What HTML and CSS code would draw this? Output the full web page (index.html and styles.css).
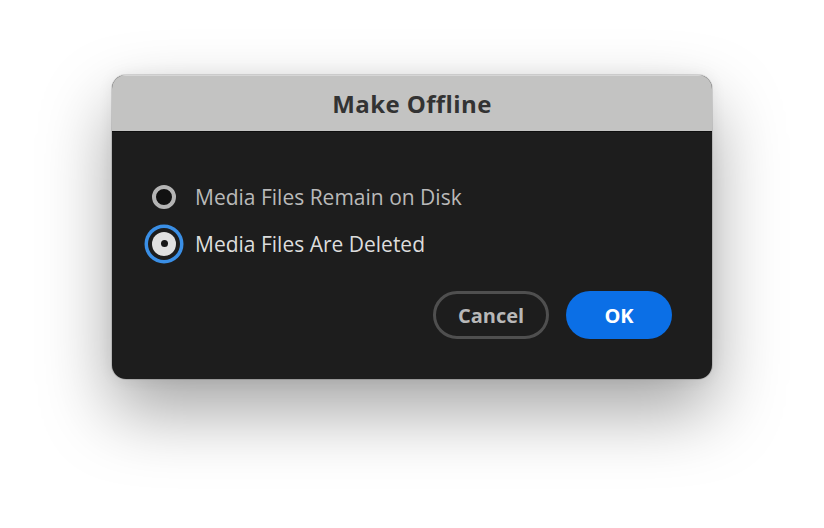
FILE: index.html
```html
<!DOCTYPE html>
<html lang="en">
<head>
<meta charset="utf-8">
<title>Make Offline</title>
<link rel="stylesheet" href="styles.css">
</head>
<body>
<div class="stage">
  <div class="dialog">
    <div class="titlebar">Make Offline</div>
    <div class="body">
      <div class="options">
        <label class="option">
          <span class="radio"></span>
          <span class="label">Media Files Remain on Disk</span>
        </label>
        <label class="option selected">
          <span class="radio checked"></span>
          <span class="label">Media Files Are Deleted</span>
        </label>
      </div>
      <div class="buttons">
        <button class="btn cancel">Cancel</button>
        <button class="btn ok">OK</button>
      </div>
    </div>
  </div>
</div>
</body>
</html>
```
FILE: styles.css
```css
html, body {
  margin: 0;
  padding: 0;
  background: #ffffff;
  width: 824px;
  height: 528px;
  overflow: hidden;
}
.stage {
  display: flex;
  justify-content: center;
  padding-top: 75px;
  font-family: "Open Sans", "Noto Sans", sans-serif;
}
.dialog {
  width: 600px;
  border-radius: 14px;
  overflow: hidden;
  background: #1d1d1d;
  box-shadow: 0 0 0 1px rgba(0,0,0,0.12), 0 32px 70px rgba(0,0,0,0.36), 0 0 16px rgba(0,0,0,0.07);
}
.titlebar {
  height: 56px;
  background: #c3c3c2;
  border-bottom: 1px solid #0e0e0e;
  display: flex;
  align-items: center;
  justify-content: center;
  font-weight: 700;
  font-size: 24px;
  letter-spacing: 0.4px;
  color: #333333;
  box-shadow: inset 0 1px 0 #d6d6d6;
}
.body {
  padding: 41px 40px 40px 40px;
  display: flex;
  flex-direction: column;
}
.options {
  display: flex;
  flex-direction: column;
}
.option {
  height: 47px;
  display: flex;
  align-items: center;
  gap: 19px;
  font-size: 21px;
  color: #b9b9b9;
}
.option.selected {
  color: #dcdcdc;
}
.radio {
  width: 24px;
  height: 24px;
  box-sizing: border-box;
  border-radius: 50%;
  border: 4px solid #b4b4b4;
  background: #111111;
  flex: none;
  display: flex;
  align-items: center;
  justify-content: center;
}
.radio.checked {
  border: none;
  background: #e0e0e0;
  box-shadow: 0 0 0 4px #1d1d1d, 0 0 0 7.5px #3a8fe6;
}
.radio.checked::after {
  content: "";
  width: 7px;
  height: 7px;
  border-radius: 50%;
  background: #161616;
}
.buttons {
  margin-top: 24px;
  display: flex;
  justify-content: flex-end;
  gap: 17px;
}
.btn {
  height: 48px;
  border-radius: 24px;
  font-family: inherit;
  font-weight: 700;
  font-size: 20px;
  box-sizing: border-box;
  display: flex;
  align-items: center;
  justify-content: center;
  padding: 0;
}
.cancel {
  width: 116px;
  background: transparent;
  border: 3px solid #4f4f4f;
  color: #b8b8b8;
}
.ok {
  width: 106px;
  background: #0b6fe6;
  border: none;
  color: #ffffff;
}
```
